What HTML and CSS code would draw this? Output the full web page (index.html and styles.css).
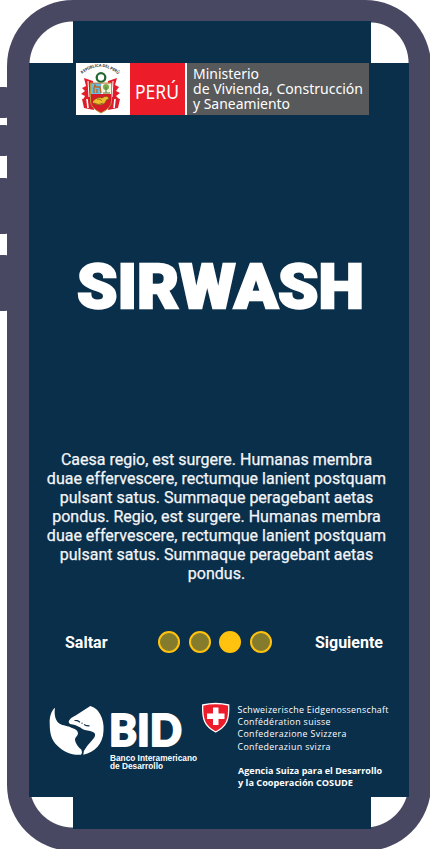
FILE: index.html
```html
<!DOCTYPE html>
<html lang="es">
<head>
<meta charset="utf-8">
<meta name="viewport" content="width=device-width, initial-scale=1">
<title>SIRWASH</title>
<link rel="stylesheet" href="styles.css">
</head>
<body>
<div class="phone">
  <span class="key key-a"></span>
  <span class="key key-b"></span>
  <span class="key key-c"></span>
  <span class="key key-d"></span>
  <main class="screen">
    <span class="corner top-left"></span>
    <span class="corner top-right"></span>
    <span class="corner bottom-left"></span>
    <span class="corner bottom-right"></span>

    <header class="ministry">
      <svg class="emblem" viewBox="0 0 54 52">
        <path id="arc" d="M6 11Q24-4 43 12" fill="none"/>
        <text class="motto"><textPath href="#arc" textLength="40">REPÚBLICA DEL PERÚ</textPath></text>
        <path d="M8 15L17 18 18 36 7 37 9 33 5 31 9 28 6 25 10 23ZM41 15L32 18 31 36 44 37 40 33 44 30 40 28 43 24 39 22Z" fill="#e31c2b"/>
        <path d="M12 18l1 16M37 18l-1 16" stroke="#fff" stroke-width="1"/>
        <path d="M6 36l10-2 2 13-10-2zM44 36l-10-2-2 13 10-2z" fill="#d91e2d"/>
        <path d="M11 36l1 9M39 36l-1 9" stroke="#fff" stroke-width="1.6"/>
        <circle cx="25" cy="14.5" r="4.3" fill="#fff" stroke="#23672f" stroke-width="2.3"/>
        <path d="M14.500 20H35.500V38Q35.500 45 25 50Q14.500 45 14.500 38Z" fill="#d71c28" stroke="#b49639"/>
        <path d="M15 20.500H25V31H15Z" fill="#68bce3"/>
        <path d="M25 20.500H35V31H25Z" fill="#f3f3db"/>
        <path d="M18 30V25l1-3 1 2h4l1 6M21 26v4" fill="none" stroke="#b66a28" stroke-width="1.4"/>
        <circle cx="30" cy="24" r="3" fill="#79aa50"/>
        <path d="M30 24v6M27 30h7" stroke="#56763b"/>
        <path d="M17 38q5-5 9-3 6-4 7 1-3 0-4 4-5 4-12 0" fill="#efbd2b" stroke="#73501e" stroke-width=".7"/>
        <path d="M18 40q5 3 9 0M21 36q4 0 5 2" fill="none" stroke="#8b5b19" stroke-width=".8"/>
      </svg>
      <svg class="country" viewBox="0 0 55 52"><text x="5" y="35.5" textLength="44" lengthAdjust="spacingAndGlyphs">PERÚ</text></svg>
      <svg class="office" viewBox="0 0 182 52">
        <text x="6" y="15.5" textLength="66" lengthAdjust="spacingAndGlyphs">Ministerio</text>
        <text x="6" y="30.5" textLength="170" lengthAdjust="spacingAndGlyphs">de Vivienda, Construcción</text>
        <text x="6" y="45.5" textLength="97" lengthAdjust="spacingAndGlyphs">y Saneamiento</text>
      </svg>
    </header>

    <h1 class="title"><svg viewBox="0 0 300 64"><text x="8" y="52" textLength="287" lengthAdjust="spacingAndGlyphs">SIRWASH</text></svg></h1>

    <p class="intro">Caesa regio, est surgere. Humanas membra<br>duae effervescere, rectumque lanient postquam<br>pulsant satus. Summaque peragebant aetas<br>pondus. Regio, est surgere. Humanas membra<br>duae effervescere, rectumque lanient postquam<br>pulsant satus. Summaque peragebant aetas<br>pondus.</p>

    <nav class="steps">
      <span class="skip">Saltar</span>
      <span class="dots"><i></i><i></i><i class="active"></i><i></i></span>
      <span class="next">Siguiente</span>
    </nav>

    <footer class="partners">
      <svg class="bid" viewBox="0 0 152 76">
        <path d="M5 1.700C1 5-.5 11-.3 17C-.3 27 1 34 7.700 40C14 46 22 49.500 31 48.700C32.500 47 32 45 31.200 43.500C28 41 25.500 37 25 34C25 31 28 30 28 27C27.500 24 25 23 22 22C18 19.500 13 20 9.300 17.500C5 14 4 8 5 1.700Z"/>
        <path d="M18.700 15.300Q20 12 26 9.300L40.300 0Q47 2 50 8C53 13 54 19 53.500 25C53 38 45 46 33.300 48.700Q33 45 35.300 42.700C38 38 42 35 44.300 31.500Q46.500 27.500 43 26C39 24 36 25 32 22.700C28 19.500 23 18.500 20 18Q18.500 17 18.700 15.300Z"/>
        <path d="M24.500 14.500l3 .2 2.500 1.500M34 18.500l2.500 1.200 3 .2M31.500 17l1 .4" fill="none" stroke="#0b2f4c" stroke-width="1.2"/>
        <text class="bid-name" x="59" y="39.700" textLength="73" lengthAdjust="spacingAndGlyphs">BID</text>
        <text class="bid-caption" x="60" y="54.500" textLength="87" lengthAdjust="spacingAndGlyphs">Banco Interamericano</text>
        <text class="bid-caption" x="60" y="63" textLength="53" lengthAdjust="spacingAndGlyphs">de Desarrollo</text>
      </svg>
      <svg class="swiss" viewBox="0 0 200 92">
        <path d="M.7 2Q13.700-1 26.700 2C27.200 16 25.200 23 13.700 29C2.200 23 .2 16 .7 2Z" fill="#ed1c2b" stroke="#fff" stroke-width="1.3"/>
        <path d="M11 4.500h5.500v6h6V16h-6v6H11v-6H5v-5.500h6z" fill="#fff"/>
        <g class="swiss-lines">
          <text x="35.5" y="9.5" textLength="151">Schweizerische Eidgenossenschaft</text>
          <text x="35.5" y="21.5" textLength="93">Confédération suisse</text>
          <text x="35.5" y="34" textLength="109">Confederazione Svizzera</text>
          <text x="35.5" y="46.5" textLength="93">Confederaziun svizra</text>
        </g>
        <g class="agency">
          <text x="36" y="71" textLength="144" lengthAdjust="spacingAndGlyphs">Agencia Suiza para el Desarrollo</text>
          <text x="36" y="82.5" textLength="115" lengthAdjust="spacingAndGlyphs">y la Cooperación COSUDE</text>
        </g>
      </svg>
    </footer>
  </main>
</div>
</body>
</html>
```
FILE: styles.css
```css
* { box-sizing: border-box; }
html, body { margin: 0; height: 849px; overflow: hidden; background: #fff; }
body { font-family: Roboto, sans-serif; }
svg { display: block; overflow: visible; }
.phone {
  position: relative;
  width: 424px;
  height: 851px;
  margin-left: 7px;
  padding: 21px 21px 22px 22px;
  border-radius: 66px;
  background: #494863;
}
.key {
  position: absolute;
  left: -10px;
  width: 12px;
  border-radius: 4px;
  background: #494863;
}
.key-a { top: 87px; height: 31px; }
.key-b { top: 125px; height: 31px; }
.key-c { top: 178px; height: 56px; }
.key-d { top: 255px; height: 56px; }
.screen {
  position: relative;
  display: flex;
  flex-direction: column;
  width: 380px;
  height: 808px;
  padding-top: 42px;
  background: #0a2f4b;
  color: #fff;
}
.corner { position: absolute; }
.top-left { left: 0; top: 0; width: 44px; height: 42px; background: radial-gradient(circle at 44px 44px, #fff 43px, #494863 44px); }
.top-right { right: 0; top: 0; width: 38px; height: 42px; background: radial-gradient(ellipse 38px 41px at 0 42px, #fff 97.5%, #494863 100%); }
.bottom-left { left: 0; bottom: 0; width: 44px; height: 32px; background: radial-gradient(circle at 44px -13px, #fff 43px, #494863 44px); }
.bottom-right { right: 0; bottom: 0; width: 38px; height: 32px; background: radial-gradient(circle at -6px -13px, #fff 43px, #494863 44px); }
.ministry { display: flex; width: 293px; height: 52px; margin-left: 47px; flex: none; background: #fff; }
.emblem { width: 54px; height: 52px; }
.motto { font: bold 4px "Noto Sans", sans-serif; fill: #333; }
.country { width: 55px; height: 52px; background: #ed1c29; fill: #fff; font: 20px "Noto Sans", sans-serif; }
.office { width: 182px; height: 52px; margin-left: 2px; background: #58595b; fill: #fff; font: 13.5px "Noto Sans", sans-serif; }
.title { width: 300px; height: 64px; margin: 141px 0 0 40px; flex: none; }
.title text { font: 900 62px Roboto, sans-serif; fill: #fff; stroke: #fff; stroke-width: 2.3px; }
.intro {
  width: 360px;
  margin: 130px 0 0 7.5px;
  flex: none;
  font-size: 16px;
  line-height: 19px;
  text-align: center;
  color: #f4f5f7;
  -webkit-text-stroke: .25px #f4f5f7;
}
.steps { display: flex; align-items: center; height: 24px; margin-top: 47px; padding: 0 26px 0 36px; flex: none; font-size: 16px; font-weight: 700; }
.dots { display: flex; gap: 8.5px; margin-left: 51px; }
.dots i { width: 22px; height: 22px; border: 2px solid #ffc20e; border-radius: 50%; background: #857b2d; }
.dots .active { background: #ffc20e; }
.next { margin-left: auto; }
.partners { display: flex; margin: 49px 0 0 21px; }
.bid { width: 152px; height: 76px; margin-top: 3px; fill: #fff; }
.bid-name { font: 900 43.5px Lato, sans-serif; stroke: #fff; stroke-width: 2px; stroke-linejoin: round; }
.bid-caption { font: bold 8.2px "Liberation Sans", sans-serif; }
.swiss { width: 200px; height: 92px; margin-right: -20px; flex: none; fill: #fff; }
.swiss-lines { font: 8.8px "Open Sans", sans-serif; }
.agency { font: bold 9.3px "Open Sans", sans-serif; }
```
